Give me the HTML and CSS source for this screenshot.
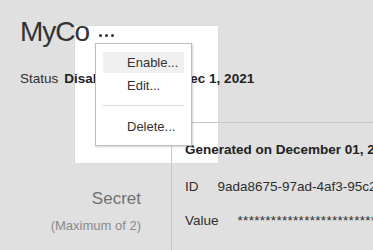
FILE: index.html
```html
<!DOCTYPE html>
<html>
<head>
<meta charset="utf-8">
<link rel="stylesheet" href="styles.css">
</head>
<body>
<div class="focus-box"></div>
<div class="page">
  <header class="header">
    <div class="title-row">
      <h1 class="title">MyCo</h1>
      <button class="more" aria-label="More actions"><span></span><span></span><span></span></button>
    </div>
    <div class="meta">
      <div class="meta-item"><span class="meta-label">Status</span><span class="meta-value">Disabled</span></div>
      <div class="meta-item"><span class="meta-label">Created</span><span class="meta-value">Dec 1, 2021</span></div>
    </div>
  </header>
  <section class="secret">
    <div class="secret-label">
      <div class="secret-title">Secret</div>
      <div class="secret-sub">(Maximum of 2)</div>
    </div>
    <div class="secret-panel">
      <div class="secret-head">Generated on December 01, 2021</div>
      <div class="field"><span class="field-label">ID</span><span class="field-value">9ada8675-97ad-4af3-95c2-1b7e4d0c8a21</span></div>
      <div class="field"><span class="field-label">Value</span><span class="field-value stars">********************************</span></div>
    </div>
  </section>
</div>
<ul class="menu">
  <li class="menu-item active">Enable...</li>
  <li class="menu-item">Edit...</li>
  <li class="menu-sep"></li>
  <li class="menu-item">Delete...</li>
</ul>
</body>
</html>
```

FILE: styles.css
```css
html, body {
  margin: 0;
  padding: 0;
}
body {
  background: #e0e0e0;
  font-family: "Liberation Sans", Arial, sans-serif;
  color: #2e2e2e;
  width: 373px;
  height: 250px;
  overflow: hidden;
  position: relative;
}
.focus-box {
  position: absolute;
  left: 75px;
  top: 26px;
  width: 143px;
  height: 137px;
  background: #fff;
  box-shadow: 0 0 1px rgba(0,0,0,0.12);
  z-index: 0;
}
.page {
  position: relative;
  z-index: 1;
}
.header {
  padding: 16px 0 0 20px;
}
.title-row {
  display: flex;
  align-items: center;
  gap: 10px;
  height: 32px;
}
.title {
  margin: 0;
  font-size: 28px;
  font-weight: normal;
  line-height: 32px;
  letter-spacing: -1px;
  color: #333;
}
.more {
  display: flex;
  gap: 3px;
  border: 0;
  padding: 0;
  background: transparent;
  margin-top: 6px;
}
.more span {
  width: 3px;
  height: 3px;
  border-radius: 50%;
  background: #333;
}
.meta {
  display: flex;
  gap: 6px;
  margin-top: 23px;
  font-size: 13.5px;
  line-height: 16px;
  white-space: nowrap;
}
.meta-item {
  display: flex;
  gap: 6px;
}
.meta-value {
  font-weight: bold;
  color: #222;
}
.secret {
  display: grid;
  grid-template-columns: 171px 1fr;
  margin-top: 35px;
  height: 128px;
}
.secret-label {
  text-align: right;
  padding: 67px 30px 0 0;
}
.secret-title {
  font-size: 17px;
  line-height: 20px;
  color: #707070;
}
.secret-sub {
  margin-top: 9px;
  font-size: 13px;
  line-height: 16px;
  color: #8a8a8a;
}
.secret-panel {
  border-top: 1px solid #c6c6c6;
  border-left: 1px solid #c6c6c6;
  padding: 19px 0 0 13px;
  font-size: 13.5px;
  line-height: 16px;
  white-space: nowrap;
  overflow: hidden;
}
.secret-head {
  font-weight: bold;
  color: #222;
}
.field {
  display: flex;
  gap: 19px;
  margin-top: 21px;
}
.field + .field {
  margin-top: 18px;
}
.stars {
  letter-spacing: 0.3px;
}
.menu {
  position: absolute;
  left: 95px;
  top: 43px;
  width: 81px;
  margin: 0;
  padding: 8px 7px 8px 7px;
  list-style: none;
  background: #fff;
  border: 1px solid #bdbdbd;
  box-shadow: 1px 1px 2px rgba(0,0,0,0.18);
  z-index: 2;
  font-size: 13px;
  color: #333;
}
.menu-item {
  height: 21px;
  line-height: 21px;
  padding-left: 24px;
  margin-bottom: 2px;
}
.menu-item.active {
  background: #f0f0f0;
}
.menu-sep {
  height: 1px;
  background: #dadada;
  margin: 9px 0 10px;
}
.menu-item:last-child {
  margin-bottom: 0;
}
```
